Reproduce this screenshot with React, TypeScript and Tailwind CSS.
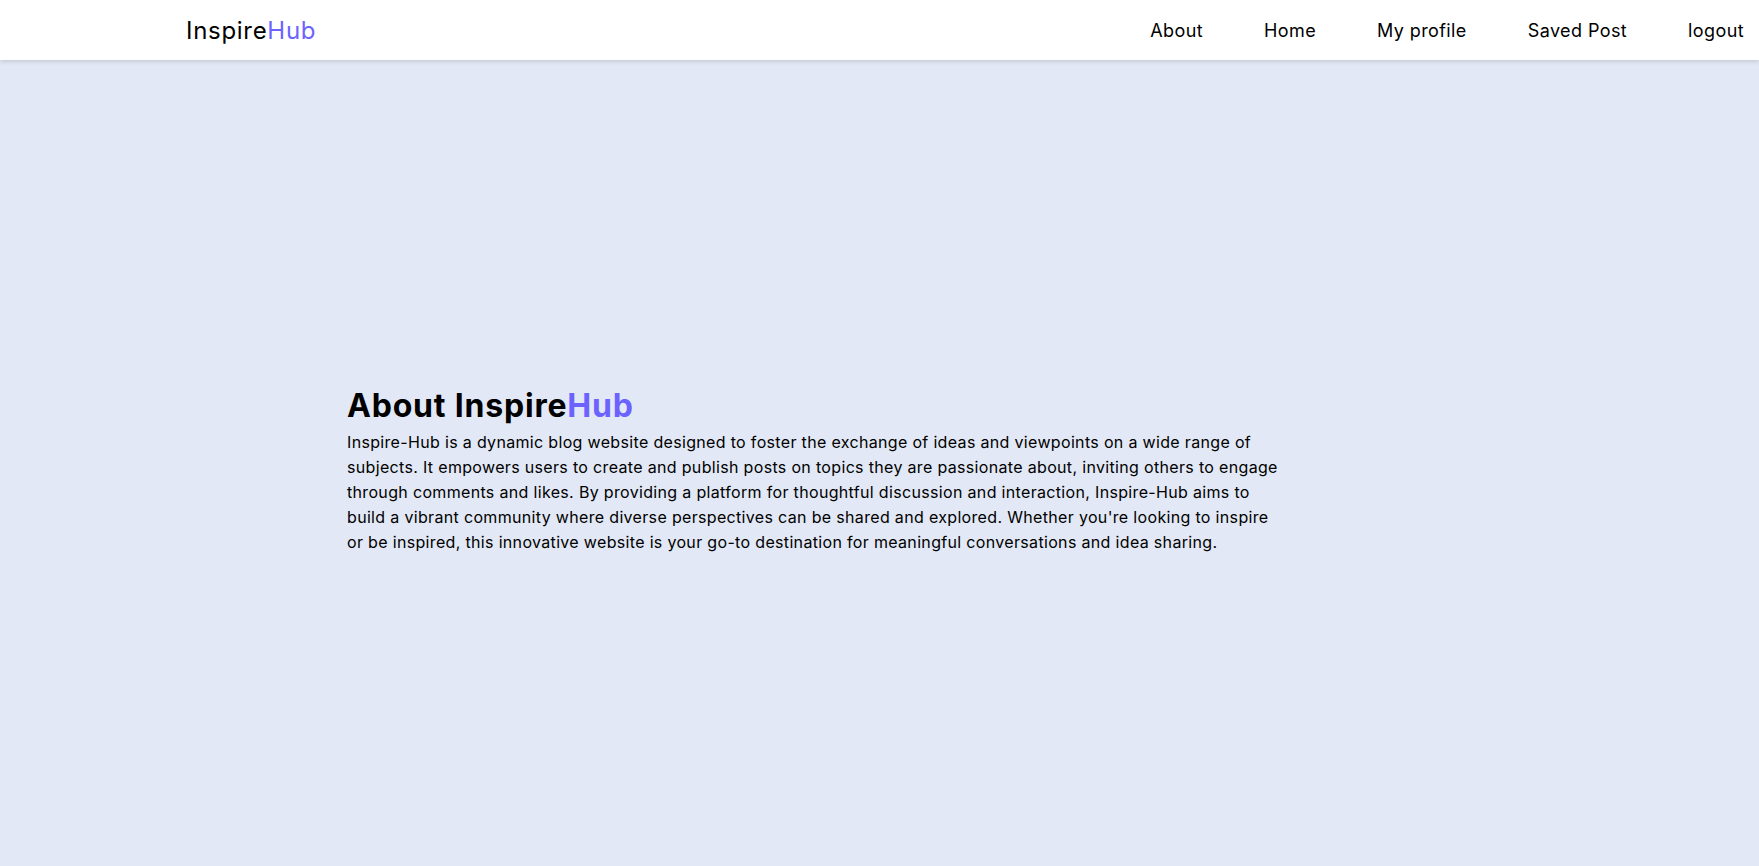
import React from "react";

export default function App() {
  const lines = [
    "Inspire-Hub is a dynamic blog website designed to foster the exchange of ideas and viewpoints on a wide range of",
    "subjects. It empowers users to create and publish posts on topics they are passionate about, inviting others to engage",
    "through comments and likes. By providing a platform for thoughtful discussion and interaction, Inspire-Hub aims to",
    "build a vibrant community where diverse perspectives can be shared and explored. Whether you're looking to inspire",
    "or be inspired, this innovative website is your go-to destination for meaningful conversations and idea sharing.",
  ];
  return (
    <div className="min-h-screen bg-[#e2e8f5] font-['Inter','Open_Sans',sans-serif] text-black">
      <header className="h-[60px] bg-white shadow-[0_2px_4px_rgba(0,0,0,0.12)] flex items-center justify-between pl-[186px] pr-[15px] pt-[1px]">
        <div className="text-[24px] tracking-[0.7px]">
          Inspire<span className="text-[#6c63ff]">Hub</span>
        </div>
        <nav className="flex items-center gap-[61px] text-[18px] tracking-[0.4px]">
          <a>About</a>
          <a>Home</a>
          <a>My profile</a>
          <a>Saved Post</a>
          <a>logout</a>
        </nav>
      </header>
      <main className="h-[806px] flex items-center pl-[347px] pt-[15px]">
        <div>
          <h1 className="text-[32px] font-bold leading-[38px] tracking-[0.8px]">
            About Inspire<span className="text-[#6c63ff]">Hub</span>
          </h1>
          <p className="mt-[5px] text-[16px] leading-[25px] tracking-[0.33px] whitespace-nowrap">
            {lines.map((l, i) => (
              <span key={i} className="block">
                {l}
              </span>
            ))}
          </p>
        </div>
      </main>
    </div>
  );
}
